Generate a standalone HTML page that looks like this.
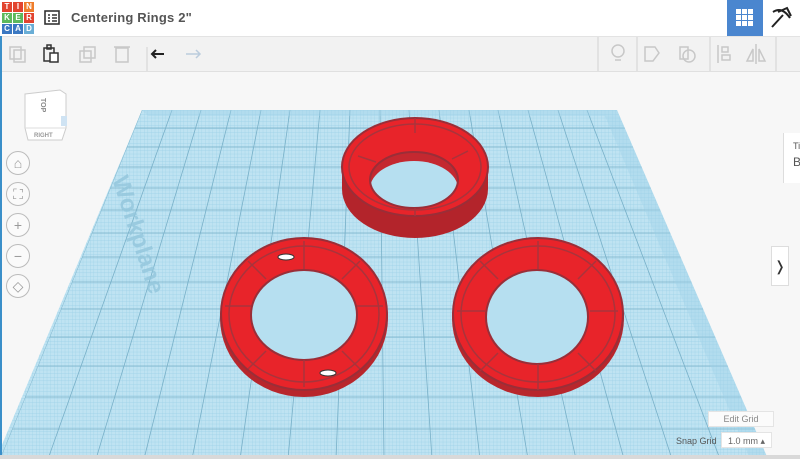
<!DOCTYPE html>
<html><head><meta charset="utf-8"><style>
body{margin:0;width:800px;height:459px;overflow:hidden;background:#f7f7f7;font-family:"Liberation Sans",sans-serif;position:relative}
.top{position:absolute;left:0;top:0;width:800px;height:36px;background:#fff;border-bottom:1px solid #e3e3e3}
.tb{position:absolute;left:0;top:37px;width:800px;height:34px;background:#f2f2f2;border-bottom:1px solid #e0e0e0}
.logo{position:absolute;left:2px;top:2px;display:grid;grid-template-columns:repeat(3,10px);grid-gap:1px}
.logo div{height:10px;color:#fff;font-size:8px;text-align:center;line-height:10px;font-weight:bold}
.title{position:absolute;left:71px;top:10px;font-size:13px;color:#555;font-weight:bold;letter-spacing:0.2px}
.nav{position:absolute;left:6px;width:22px;height:22px;border:1px solid #bbb;border-radius:50%;background:#fafafa;color:#999;text-align:center;line-height:22px;font-size:14px}
</style></head><body>
<div class="top">
<div class="logo">
<div style="background:#e2442f">T</div><div style="background:#e2442f">I</div><div style="background:#ef7d2b">N</div>
<div style="background:#5cb85c">K</div><div style="background:#5cb85c">E</div><div style="background:#e2442f">R</div>
<div style="background:#3b78c2">C</div><div style="background:#3b78c2">A</div><div style="background:#6aaed6">D</div>
</div>
<svg style="position:absolute;left:44px;top:10px" width="16" height="15"><rect x="1" y="1" width="14" height="13" fill="none" stroke="#333" stroke-width="1.6"/><path d="M4 5h2M8 5h5M4 8h2M8 8h5M4 11h2M8 11h5" stroke="#333" stroke-width="1.4"/></svg>
<div class="title">Centering Rings 2"</div>
<div style="position:absolute;left:727px;top:0;width:36px;height:36px;background:#4a86cf"></div>
<svg style="position:absolute;left:736px;top:9px" width="18" height="18"><g fill="#fff"><rect x="0" y="0" width="5" height="5"/><rect x="6" y="0" width="5" height="5"/><rect x="12" y="0" width="5" height="5"/><rect x="0" y="6" width="5" height="5"/><rect x="6" y="6" width="5" height="5"/><rect x="12" y="6" width="5" height="5"/><rect x="0" y="12" width="5" height="5"/><rect x="6" y="12" width="5" height="5"/><rect x="12" y="12" width="5" height="5"/></g></svg>
<svg style="position:absolute;left:768px;top:6px" width="26" height="24"><path d="M5 6 Q14 0 22 12 M10 6 L19 2 L23 10 M15 9 L4 21" stroke="#222" stroke-width="2" fill="none"/></svg>
</div>
<div class="tb">
<svg width="800" height="34" style="position:absolute;left:0;top:0" fill="none" stroke="#c8c8c8" stroke-width="1.5">
<rect x="10" y="10" width="11" height="12"/><rect x="14" y="13" width="11" height="12"/>
<rect x="44" y="11" width="10" height="13" stroke="#333"/><rect x="47" y="8" width="4" height="4" stroke="#333"/><rect x="50" y="16" width="8" height="9" stroke="#333" fill="#fff"/>
<rect x="80" y="14" width="11" height="11"/><rect x="84" y="10" width="11" height="11"/>
<rect x="116" y="11" width="12" height="14"/><path d="M114 10h16"/>
<path d="M147 10v36" stroke="#ddd"/>
<path d="M152 17h12 M156 13l-4 4 4 4" stroke="#222" stroke-width="2"/>
<path d="M186 17h13 M196 13l4 4-4 4" stroke="#bcd"/>
<path d="M598 0v34M637 0v34M710 0v34M776 0v34" stroke="#ddd"/>
<circle cx="618" cy="14" r="6"/><path d="M615 23h6"/>
<path d="M645 10h10l4 6-6 8h-8z"/><path d="M680 10h8v12h-8z"/><circle cx="689" cy="19" r="6"/>
<path d="M718 8v18M722 10h6v5h-6zM722 18h8v5h-8z"/><path d="M756 7v20M753 12l-6 12h6zM759 12l6 12h-6z"/>
</svg>
</div>
<svg width="800" height="388" style="position:absolute;left:0;top:71px">
<defs>
<pattern id="m" width="3.6" height="3.6" patternUnits="userSpaceOnUse"><rect width="3.6" height="3.6" fill="#bfe3f2"/><path d="M0 0h3.6M0 0v3.6" stroke="#99d0e6" stroke-width="0.6"/></pattern>
<clipPath id="c"><polygon points="142,39 617,39 768,388 0,388"/></clipPath>
<clipPath id="h"><ellipse cx="414" cy="109" rx="44" ry="28"/></clipPath>
</defs>
<polygon points="142,39 617,39 768,388 -4,388" fill="url(#m)"/>
<g clip-path="url(#c)" stroke="#78b0c8" stroke-width="0.8">
<path d="M142 39L0 388M172 39L48 388M201 39L96 388M231 39L144 388M261 39L192 388M290 39L240 388M320 39L288 388M350 39L336 388M380 39L384 388M409 39L432 388M439 39L480 388M469 39L528 388M498 39L576 388M528 39L624 388M558 39L672 388M587 39L720 388"/>
<path d="M0 57H800M0 76H800M0 96H800M0 117H800M0 139H800M0 162H800M0 186H800M0 211H800M0 238H800M0 266H800M0 295H800M0 326H800M0 358H800"/>
</g>
<polygon points="142,39 617,39 768,388 750,388 605,45 148,45" fill="#9fd2e8" opacity=".4"/>
<text x="0" y="0" transform="translate(112,108) rotate(72)" font-size="24" font-weight="bold" fill="#93c6dc" opacity=".8">Workplane</text>
<g>
<ellipse cx="415" cy="118" rx="73" ry="49" fill="#b3242b"/>
<rect x="342" y="96" width="146" height="22" fill="#b3242b"/>
<ellipse cx="415" cy="96" rx="73" ry="49" fill="#e8242a" stroke="#9a2e38" stroke-width="2"/>
<ellipse cx="415" cy="96" rx="66" ry="43" fill="none" stroke="#a8343c" stroke-width="1.5"/>
<ellipse cx="414" cy="109" rx="44" ry="28" fill="#c42830"/>
<ellipse cx="414" cy="118" rx="44" ry="28" fill="#b6dff0" clip-path="url(#h)"/>
<ellipse cx="414" cy="109" rx="44" ry="28" fill="none" stroke="#9a2e38" stroke-width="2"/>
<path d="M358 85l18 6M468 80l-16 8M415 47v15M415 137v8" stroke="#a8343c" stroke-width="1.5"/>
</g>
<g>
<ellipse cx="304" cy="247" rx="84" ry="79" fill="#b8262c"/>
<ellipse cx="304" cy="243" rx="83" ry="76" fill="#e8242a" stroke="#9a2e38" stroke-width="2"/>
<ellipse cx="304" cy="243" rx="75" ry="68" fill="none" stroke="#a8343c" stroke-width="1.5"/>
<ellipse cx="304" cy="244" rx="53" ry="45" fill="#b6dff0" stroke="#9a2e38" stroke-width="2"/>
<path d="M304 170v28M304 289v27M225 235h26M357 235h26M248 190l18 18M360 190l-18 18M248 298l18-18M360 298l-18-18" stroke="#a8343c" stroke-width="1.5"/>
<ellipse cx="286" cy="186" rx="8" ry="3" fill="#fff" stroke="#333"/><ellipse cx="328" cy="302" rx="8" ry="3" fill="#fff" stroke="#333"/>
</g>
<g>
<ellipse cx="538" cy="247" rx="86" ry="79" fill="#b8262c"/>
<ellipse cx="538" cy="243" rx="85" ry="76" fill="#e8242a" stroke="#9a2e38" stroke-width="2"/>
<ellipse cx="538" cy="243" rx="77" ry="68" fill="none" stroke="#a8343c" stroke-width="1.5"/>
<ellipse cx="537" cy="246" rx="51" ry="47" fill="#b6dff0" stroke="#9a2e38" stroke-width="2"/>
<path d="M538 170v28M538 293v26M457 240h28M590 240h28M480 190l18 18M596 190l-18 18M480 300l18-18M596 300l-18-18" stroke="#a8343c" stroke-width="1.5"/>
</g>
</svg>
<div style="position:absolute;left:0;top:36px;width:2px;height:423px;background:#3a8fc9"></div>
<svg style="position:absolute;left:22px;top:88px" width="50" height="58"><path d="M3 6L38 2L44 6L44 40L40 52L6 52L3 40Z" fill="#fff" stroke="#ccc"/><path d="M3 40h41" stroke="#ddd"/><rect x="39" y="28" width="6" height="10" fill="#cfe3f3"/><text x="0" y="0" transform="translate(19,10) rotate(90)" font-size="7" fill="#888" font-weight="bold">TOP</text><text x="12" y="49" font-size="6" fill="#999" font-weight="bold">RIGHT</text></svg>
<div class="nav" style="top:151px">⌂</div><div class="nav" style="top:182px">⛶</div><div class="nav" style="top:213px">+</div><div class="nav" style="top:244px">−</div><div class="nav" style="top:274px">◇</div>
<div style="position:absolute;left:783px;top:133px;width:17px;height:50px;background:#fff;border-left:1px solid #ddd;font-size:9px;color:#555"><div style="padding:8px 0 0 9px">Ti</div><div style="padding:4px 0 0 9px;font-size:12px">B</div></div>
<div style="position:absolute;left:771px;top:246px;width:16px;height:38px;background:#fff;border:1px solid #ddd;font-size:14px;text-align:center;line-height:38px;color:#333">❭</div>
<div style="position:absolute;left:708px;top:411px;width:64px;height:14px;background:#fbfbfb;border:1px solid #e4e4e4;font-size:9px;color:#888;text-align:center;line-height:14px">Edit Grid</div>
<div style="position:absolute;left:676px;top:436px;font-size:9px;color:#555">Snap Grid</div>
<div style="position:absolute;left:721px;top:432px;width:51px;height:16px;background:#fff;border:1px solid #e4e4e4;font-size:9px;color:#666;line-height:16px;padding-left:6px;box-sizing:border-box">1.0 mm ▴</div>
<div style="position:absolute;left:0;top:455px;width:800px;height:4px;background:#d9d9d9"></div>
</body></html>
